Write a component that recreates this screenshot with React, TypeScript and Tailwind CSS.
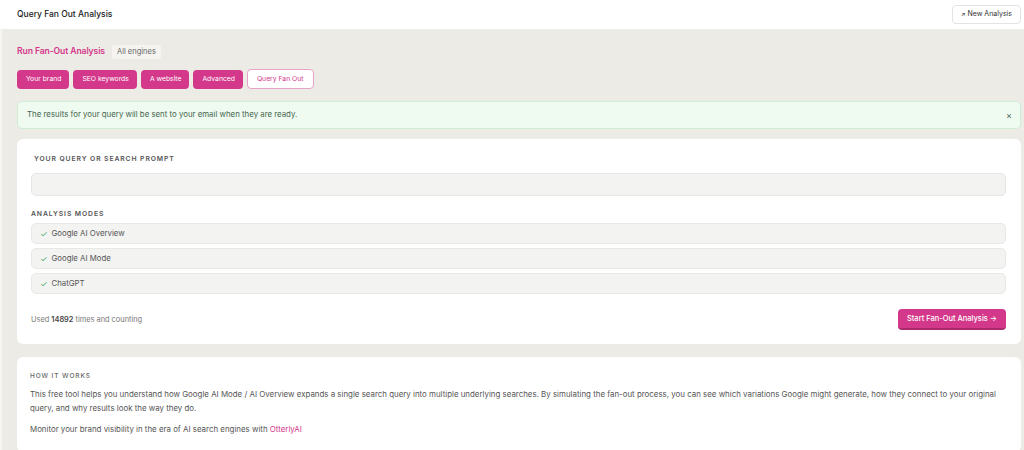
import React from "react";

const font = { fontFamily: "Inter, 'Noto Sans', sans-serif" };

export default function App() {
  const tabs = ["Your brand", "SEO keywords", "A website", "Advanced"];
  const modes = ["Google AI Overview", "Google AI Mode", "ChatGPT"];
  return (
    <div style={font} className="w-[1024px] h-[450px] overflow-hidden bg-[#edebe6] flex flex-col">
      <header className="h-[29px] shrink-0 bg-white flex items-center justify-between pl-[17px] pr-[3px]">
        <div className="text-[8.5px] text-[#222] font-medium">Query Fan Out Analysis</div>
        <button className="h-[19px] px-[8px] rounded-[4px] border border-[#e3e3e3] bg-white text-[7px] text-[#333] flex items-center gap-[2px]">
          <span className="text-[6px]">↗</span>New Analysis
        </button>
      </header>
      <main className="flex-1 border-l-[2px] border-[#f6f5f2] pl-[15px] pr-[3px] pt-[14px] flex flex-col">
        <div className="flex items-center gap-[7px] h-[17px]">
          <h1 className="text-[8.6px] font-semibold text-[#d3368a] tracking-[-0.1px]">Run Fan-Out Analysis</h1>
          <span className="h-[14px] px-[5px] rounded-[2px] bg-[#f5f4f1] text-[7.5px] text-[#666] flex items-center">All engines</span>
        </div>
        <div className="flex gap-[4px] mt-[9px] items-center">
          {tabs.map((t) => (
            <button key={t} className="h-[19px] pl-[9px] pr-[8px] rounded-[4px] bg-[#d4388a] text-white text-[6.8px] flex items-center">{t}</button>
          ))}
          <button className="h-[20px] px-[9px] rounded-[4px] bg-white border border-[#e7a3c7] text-[#d3368a] text-[6.8px] flex items-center">Query Fan Out</button>
        </div>
        <div className="mt-[12px] h-[28px] rounded-[5px] bg-[#effbf1] border border-[#cdeed5] flex items-center justify-between pl-[9px] pr-[8px]">
          <span className="text-[7.85px] text-[#46654e]">The results for your query will be sent to your email when they are ready.</span>
          <span className="text-[9px] text-[#4d6b55] leading-none">×</span>
        </div>
        <section className="mt-[10px] bg-white rounded-[6px] pl-[14px] pr-[15px] pt-[15px] pb-[14px] flex flex-col">
          <div className="text-[6.8px] font-semibold tracking-[0.9px] text-[#555] pl-[3px]">YOUR QUERY OR SEARCH PROMPT</div>
          <div className="mt-[9px] h-[23px] rounded-[5px] bg-[#f3f3f2] border border-[#e6e6e4]"></div>
          <div className="mt-[13px] text-[6.8px] font-semibold tracking-[0.9px] text-[#555]">ANALYSIS MODES</div>
          <div className="mt-[4px] flex flex-col gap-[4px]">
            {modes.map((m) => (
              <div key={m} className="h-[21px] rounded-[5px] bg-[#f3f3f2] border border-[#e8e8e6] flex items-center pl-[8px] gap-[4px]">
                <span className="text-[8.5px] text-[#52b06f]">✓</span>
                <span className="text-[7.8px] text-[#555]">{m}</span>
              </div>
            ))}
          </div>
          <div className="mt-[15px] flex items-center justify-between">
            <div className="text-[7.4px] text-[#777]">Used <span className="font-semibold text-[#444]">14892</span> times and counting</div>
            <button className="h-[21px] px-[9px] rounded-[4px] bg-[#d4388a] border-b-[2px] border-[#a82a6c] text-white text-[7.5px] font-medium flex items-center">Start Fan-Out Analysis →</button>
          </div>
        </section>
        <section className="mt-[13px] bg-white rounded-[6px] px-[13px] pt-[15px] pb-[16px] flex-1">
          <div className="text-[6.5px] font-medium tracking-[0.9px] text-[#666]">HOW IT WORKS</div>
          <p className="mt-[5px] text-[7.9px] leading-[14px] text-[#555]">
            This free tool helps you understand how Google AI Mode / AI Overview expands a single search query into multiple underlying searches. By simulating the fan-out process, you can see which variations Google might generate, how they connect to your original query, and why results look the way they do.
          </p>
          <p className="mt-[7px] text-[7.9px] leading-[14px] text-[#555]">
            Monitor your brand visibility in the era of AI search engines with <span className="text-[#d3368a]">OtterlyAI</span>
          </p>
        </section>
      </main>
    </div>
  );
}
